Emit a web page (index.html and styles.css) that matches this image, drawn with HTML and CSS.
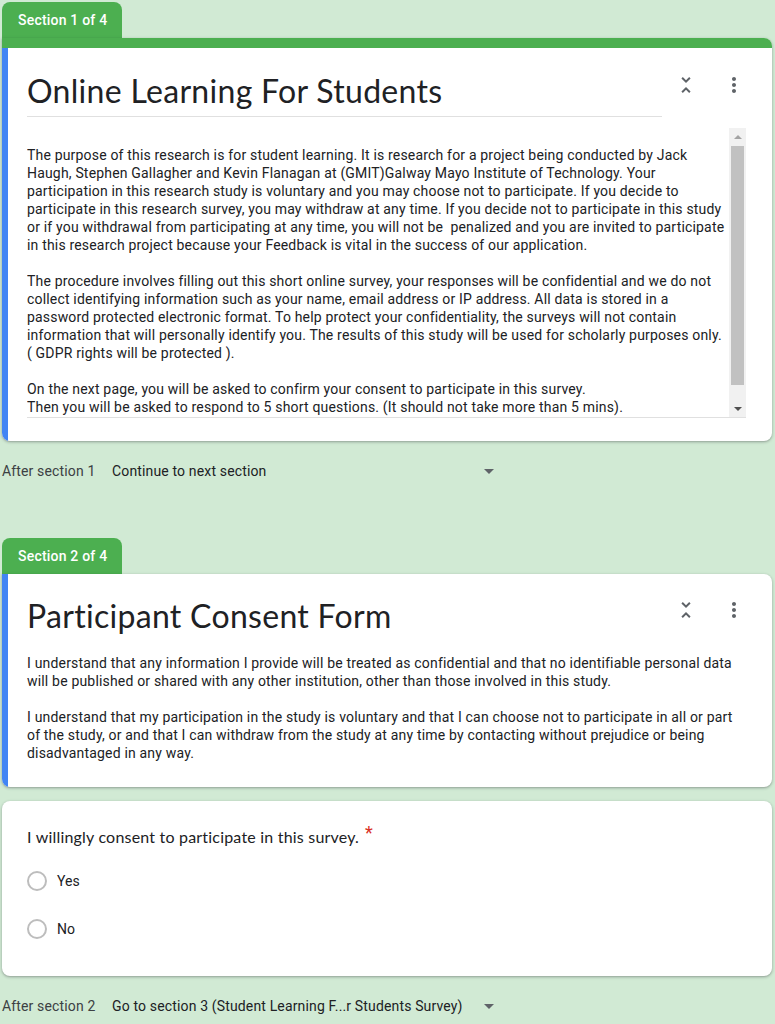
FILE: index.html
```html
<!DOCTYPE html>
<html>
<head>
<meta charset="utf-8">
<link rel="stylesheet" href="styles.css">
</head>
<body>
<div class="page">

  <div class="section">
    <div class="tab">Section 1 of 4</div>
    <div class="card card-first">
      <div class="topbar"></div>
      <div class="card-body accent">
        <div class="header">
          <h1 class="title underline">Online Learning For Students</h1>
          <div class="icons">
            <svg class="icon" viewBox="0 0 24 24" width="24" height="24"><path fill="#5f6368" d="M7.41 18.59L8.83 20 12 16.83 15.170 20l1.41-1.41L12 14l-4.59 4.59zm9.18-13.18L15.17 4 12 7.17 8.83 4 7.41 5.41 12 10l4.59-4.59z"/></svg>
            <svg class="icon" viewBox="0 0 24 24" width="24" height="24"><path fill="#5f6368" d="M12 8c1.1 0 2-.9 2-2s-.9-2-2-2-2 .9-2 2 .9 2 2 2zm0 2c-1.1 0-2 .9-2 2s.9 2 2 2 2-.9 2-2-.9-2-2-2zm0 6c-1.1 0-2 .9-2 2s.9 2 2 2 2-.9 2-2-.9-2-2-2z"/></svg>
          </div>
        </div>
        <div class="desc-box">
          <div class="desc-text">
            <p>The purpose of this research is for student learning. It is research for a project being conducted by Jack<br>Haugh, Stephen Gallagher and Kevin Flanagan at (GMIT)Galway Mayo Institute of Technology. Your<br>participation in this research study is voluntary and you may choose not to participate. If you decide to<br>participate in this research survey, you may withdraw at any time. If you decide not to participate in this study<br>or if you withdrawal from participating at any time, you will not be &nbsp;penalized and you are invited to participate<br>in this research project because your Feedback is vital in the success of our application.</p>
            <p>The procedure involves filling out this short online survey, your responses will be confidential and we do not<br>collect identifying information such as your name, email address or IP address. All data is stored in a<br>password protected electronic format. To help protect your confidentiality, the surveys will not contain<br>information that will personally identify you. The results of this study will be used for scholarly purposes only.<br>( GDPR rights will be protected ).</p>
            <p>On the next page, you will be asked to confirm your consent to participate in this survey.<br>Then you will be asked to respond to 5 short questions. (It should not take more than 5 mins).</p>
          </div>
          <div class="scrollbar">
            <div class="sb-btn"><span class="tri-up"></span></div>
            <div class="sb-thumb"></div>
            <div class="sb-rest"></div>
            <div class="sb-btn"><span class="tri-down dark"></span></div>
          </div>
        </div>
      </div>
    </div>
    <div class="after">
      <span class="after-label">After section 1</span>
      <div class="dropdown">
        <span>Continue to next section</span>
        <span class="tri-down drop-arrow"></span>
      </div>
    </div>
  </div>

  <div class="section section-2">
    <div class="tab">Section 2 of 4</div>
    <div class="card card-second">
      <div class="card-body accent">
        <div class="header">
          <h1 class="title">Participant Consent Form</h1>
          <div class="icons icons-2">
            <svg class="icon" viewBox="0 0 24 24" width="24" height="24"><path fill="#5f6368" d="M7.41 18.59L8.83 20 12 16.83 15.17 20l1.41-1.41L12 14l-4.59 4.59zm9.18-13.18L15.17 4 12 7.17 8.83 4 7.41 5.41 12 10l4.59-4.59z"/></svg>
            <svg class="icon" viewBox="0 0 24 24" width="24" height="24"><path fill="#5f6368" d="M12 8c1.1 0 2-.9 2-2s-.9-2-2-2-2 .9-2 2 .9 2 2 2zm0 2c-1.1 0-2 .9-2 2s.9 2 2 2 2-.9 2-2-.9-2-2-2zm0 6c-1.1 0-2 .9-2 2s.9 2 2 2 2-.9 2-2-.9-2-2-2z"/></svg>
          </div>
        </div>
        <div class="desc-plain">
          <p>I understand that any information I provide will be treated as confidential and that no identifiable personal data<br>will be published or shared with any other institution, other than those involved in this study.</p>
          <p>I understand that my participation in the study is voluntary and that I can choose not to participate in all or part<br>of the study, or and that I can withdraw from the study at any time by contacting without prejudice or being<br>disadvantaged in any way.</p>
        </div>
      </div>
    </div>

    <div class="card question">
      <div class="q-title">I willingly consent to participate in this survey.<span class="req">*</span></div>
      <div class="option"><span class="radio"></span><span class="opt-label">Yes</span></div>
      <div class="option"><span class="radio"></span><span class="opt-label">No</span></div>
    </div>

    <div class="after">
      <span class="after-label">After section 2</span>
      <div class="dropdown">
        <span>Go to section 3 (Student Learning F...r Students Survey)</span>
        <span class="tri-down drop-arrow"></span>
      </div>
    </div>
  </div>

</div>
</body>
</html>
```

FILE: styles.css
```css
html, body {
  margin: 0;
  padding: 0;
  background: #d1ead4;
}
body {
  font-family: Roboto, "Liberation Sans", Arial, sans-serif;
  color: #202124;
  font-size: 14px;
}
.page {
  padding: 2px 3px 0 2px;
}
.tab {
  width: 120px;
  height: 36px;
  box-sizing: border-box;
  padding-left: 16px;
  background: #4caf50;
  color: #fff;
  border-radius: 8px 8px 0 0;
  font-size: 14px;
  line-height: 36px;
  font-weight: 500;
  letter-spacing: 0.2px;
}
.card {
  background: #fff;
  border-radius: 8px;
  box-shadow: 0 1px 2px rgba(60, 64, 67, 0.3), 0 1px 3px 1px rgba(60, 64, 67, 0.12);
  overflow: hidden;
}
.card-first,
.card-second {
  border-top-left-radius: 0;
}
.topbar {
  height: 10px;
  background: #4caf50;
}
.card-body {
  padding: 23px 26px 23px 19px;
}
.accent {
  border-left: 6px solid #4285f4;
}
.card-second .card-body {
  padding-top: 22px;
  padding-bottom: 25px;
}
.header {
  display: flex;
  align-items: flex-start;
}
.title {
  flex: 1;
  margin: 0;
  font-family: "Lato", Roboto, sans-serif;
  font-weight: 400;
  font-size: 32px;
  line-height: 40px;
  letter-spacing: 0.3px;
  color: #202124;
}
.underline {
  padding-bottom: 5px;
  border-bottom: 1px solid #e0e0e0;
}
.icons {
  display: flex;
  gap: 24px;
  margin-left: 12px;
  margin-top: 2px;
}
.icon {
  display: block;
}
.desc-box {
  margin-top: 11px;
  height: 290px;
  box-sizing: border-box;
  border-bottom: 1px solid #e0e0e0;
  display: flex;
}
.desc-text {
  flex: 1;
  overflow: hidden;
  padding-top: 18px;
  white-space: nowrap;
  line-height: 18px;
  letter-spacing: 0.18px;
}
.desc-text p,
.desc-plain p {
  margin: 0 0 18px 0;
}
.scrollbar {
  width: 17px;
  background: #f1f1f1;
  display: flex;
  flex-direction: column;
  align-items: center;
}
.sb-btn {
  height: 17px;
  width: 17px;
  display: flex;
  align-items: center;
  justify-content: center;
}
.sb-thumb {
  width: 13px;
  height: 239px;
  background: #c1c1c1;
  margin-top: 1px;
}
.sb-rest {
  flex: 1;
}
.tri-up {
  width: 0;
  height: 0;
  border-left: 4px solid transparent;
  border-right: 4px solid transparent;
  border-bottom: 4px solid #a3a3a3;
}
.tri-down {
  width: 0;
  height: 0;
  border-left: 4px solid transparent;
  border-right: 4px solid transparent;
  border-top: 4px solid #a3a3a3;
}
.tri-down.dark {
  border-top-color: #505050;
}
.desc-plain {
  margin-top: 18px;
  line-height: 18px;
  white-space: nowrap;
  letter-spacing: 0.18px;
}
.desc-plain p:last-child {
  margin-bottom: 0;
}
.after {
  display: flex;
  align-items: center;
  height: 40px;
  margin-top: 10px;
  letter-spacing: 0.15px;
}
.after-label {
  width: 110px;
  color: #3c4043;
}
.dropdown {
  width: 388px;
  display: flex;
  align-items: center;
  justify-content: space-between;
  color: #202124;
}
.drop-arrow {
  border-left: 5px solid transparent;
  border-right: 5px solid transparent;
  border-top: 5px solid #5f6368;
  margin-right: 6px;
  margin-top: 1px;
}
.section-2 {
  margin-top: 47px;
}
.question {
  margin-top: 14px;
  padding: 24px 26px 23px 25px;
}
.q-title {
  font-family: "Lato", Roboto, sans-serif;
  font-size: 16px;
  line-height: 24px;
  letter-spacing: 0.2px;
  margin-bottom: 8px;
}
.req {
  color: #d93025;
  font-family: Roboto, sans-serif;
  font-size: 18px;
  margin-left: 6px;
  position: relative;
  top: -4px;
}
.option {
  height: 48px;
  display: flex;
  align-items: center;
}
.radio {
  width: 16px;
  height: 16px;
  border: 2px solid #bdbdbd;
  border-radius: 50%;
  margin-right: 10px;
}
.opt-label {
  color: #202124;
}
```
